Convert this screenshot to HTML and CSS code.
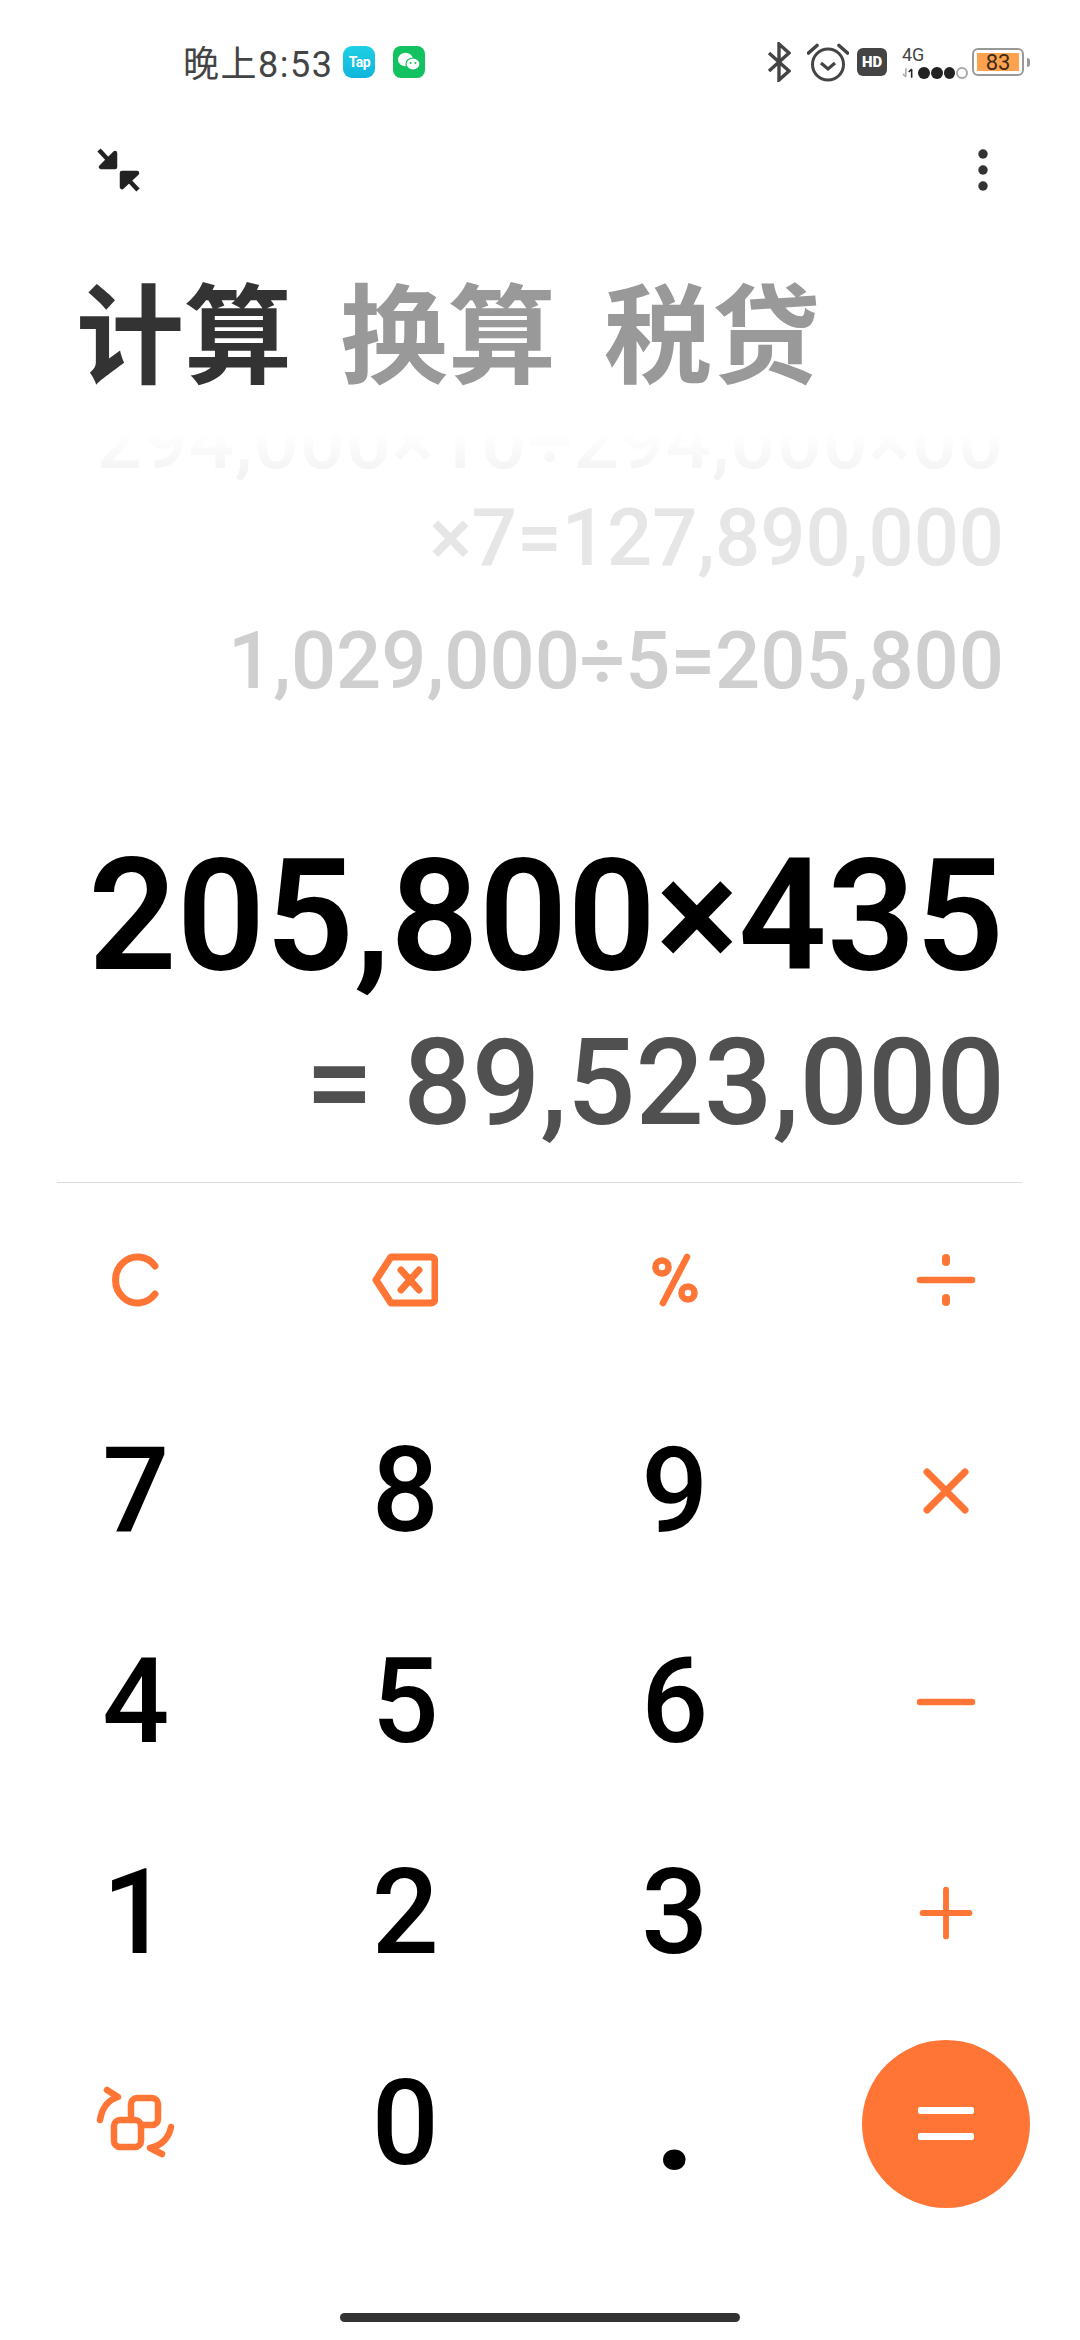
FILE: index.html
```html
<!DOCTYPE html>
<html lang="zh-CN">
  <head>
    <meta charset="UTF-8" />
    <title>计算器</title>
    <link rel="stylesheet" href="styles.css">
  </head>
  <body>
    <div class="phone">
      <!-- status bar -->
      <div class="status">
        <div class="status-left">
          <span class="time">晚上8:53</span>
          <span class="tap-badge">Tap</span>
          <svg class="wechat" viewBox="0 0 32 32">
            <rect width="32" height="32" rx="8" fill="#12c15f"/>
            <ellipse cx="12.5" cy="13.5" rx="7.5" ry="6.8" fill="#fff"/>
            <ellipse cx="20" cy="18" rx="7" ry="6" fill="#fff" stroke="#12c15f" stroke-width="1.2"/>
            <circle cx="17.6" cy="17" r="1" fill="#12c15f"/>
            <circle cx="22.4" cy="17" r="1" fill="#12c15f"/>
          </svg>
        </div>
        <div class="status-right">
          <svg class="ic-bt" viewBox="0 0 24 40" fill="none" stroke="#444" stroke-width="3.4">
            <path d="M2 11 22 29 12 38V2l10 9L2 29"/>
          </svg>
          <svg class="ic-alarm" viewBox="0 0 42 40" fill="none" stroke="#444" stroke-width="3">
            <circle cx="21" cy="22.500" r="15.500"/>
            <path d="M14 21l7 6 7-6" stroke-width="3.2"/>
            <path d="M1.500 11 10 3.500M40.500 11 32 3.500" stroke-width="3.600" stroke-linecap="round"/>
          </svg>
          <span class="hd">HD</span>
          <div class="signal">
            <span class="net">4G</span>
            <div class="dots">
              <svg class="arrows" viewBox="0 0 16 12" fill="none" stroke-width="1.600">
                <path d="M4 1v9M1 7l3 3" stroke="#aaa"/>
                <path d="M10 11V2M7 5l3-3" stroke="#222"/>
              </svg>
              <i class="dot"></i><i class="dot"></i><i class="dot"></i><i class="dot off"></i>
            </div>
          </div>
          <div class="battery"><div class="level">83</div></div>
          <i class="nub"></i>
        </div>
      </div>

      <!-- toolbar -->
      <div class="toolbar">
        <svg class="ic-shrink" viewBox="0 0 44 44" fill="#222" stroke="#222" stroke-width="4.500" stroke-linejoin="round">
          <path d="M4 19H18V5Z"/>
          <path d="M2 2 16 17" fill="none"/>
          <path d="M25 39V25H40Z"/>
          <path d="M41 42 27 27" fill="none"/>
        </svg>
        <svg class="ic-more" viewBox="0 0 12 44" fill="#333">
          <circle cx="6" cy="6" r="4.700"/>
          <circle cx="6" cy="22" r="4.700"/>
          <circle cx="6" cy="38" r="4.700"/>
        </svg>
      </div>

      <!-- tabs -->
      <div class="tabs">
        <span class="tab active">计算</span>
        <span class="tab">换算</span>
        <span class="tab">税贷</span>
      </div>

      <!-- history and current expression -->
      <div class="history">
        <div class="line l1">294,000×10÷294,000×00</div>
        <div class="line l2">×7=127,890,000</div>
        <div class="line l3">1,029,000÷5=205,800</div>
      </div>
      <div class="expr">205,800×435</div>
      <div class="result">= 89,523,000</div>
      <div class="divider"></div>

      <!-- keypad -->
      <div class="keys">
        <div class="key">
          <svg class="op" viewBox="0 0 60 54" fill="none" stroke="#ff7535" stroke-width="7" stroke-linecap="round">
            <path d="M49 13A22 23 0 1 0 49 41"/>
          </svg>
        </div>
        <div class="key">
          <svg class="op-back" viewBox="0 0 66 54" fill="none" stroke="#ff7535" stroke-width="7" stroke-linejoin="round" stroke-linecap="round">
            <path d="M19 4H59a4 4 0 0 1 4 4V46a4 4 0 0 1-4 4H19L4 27Z"/>
            <path d="M29 17 47 37M47 17 29 37"/>
          </svg>
        </div>
        <div class="key">
          <svg class="op" viewBox="0 0 48 54" fill="none" stroke="#ff7535" stroke-width="6.500" stroke-linecap="round">
            <path d="M36 4 12 50"/>
            <circle cx="11" cy="14" r="6.500"/>
            <circle cx="37" cy="40" r="6.500"/>
          </svg>
        </div>
        <div class="key">
          <svg class="op" viewBox="0 0 60 54" fill="none" stroke="#ff7535" stroke-width="6.500" stroke-linecap="round">
            <path d="M4 27H56"/>
            <path d="M30 5v4M30 45v4" stroke-width="8"/>
          </svg>
        </div>

        <div class="key">7</div>
        <div class="key">8</div>
        <div class="key">9</div>
        <div class="key">
          <svg class="op" viewBox="0 0 60 54" fill="none" stroke="#ff7535" stroke-width="7" stroke-linecap="round">
            <path d="M11 8 49 46M49 8 11 46"/>
          </svg>
        </div>

        <div class="key">4</div>
        <div class="key">5</div>
        <div class="key">6</div>
        <div class="key">
          <svg class="op" viewBox="0 0 60 54" fill="none" stroke="#ff7535" stroke-width="6.500" stroke-linecap="round">
            <path d="M4 27H56"/>
          </svg>
        </div>

        <div class="key">1</div>
        <div class="key">2</div>
        <div class="key">3</div>
        <div class="key">
          <svg class="op" viewBox="0 0 60 60" fill="none" stroke="#ff7535" stroke-width="6.500" stroke-linecap="round">
            <path d="M4 30H56M30 4V56"/>
          </svg>
        </div>

        <div class="key">
          <svg class="ic-swap" viewBox="0 0 76 76" fill="none" stroke="#ff7535" stroke-width="6.500" stroke-linecap="round" stroke-linejoin="round">
            <path d="M33 34V18a6 6 0 0 1 6-6H54a6 6 0 0 1 6 6V33a6 6 0 0 1-6 6H43"/>
            <rect x="16" y="34" width="27" height="27" rx="6"/>
            <path d="M2 34C4 22 10 14 20 11L9 4"/>
            <path d="M73 41C71 52 63 60 52 62L64 68"/>
          </svg>
        </div>
        <div class="key">0</div>
        <div class="key key-dot">.</div>
        <div class="key"><div class="equals"><i></i><i></i></div></div>
      </div>

      <div class="home-bar"></div>
    </div>
  </body>
</html>
```

FILE: styles.css
```css
* {
  margin: 0;
  padding: 0;
  box-sizing: border-box;
}

body {
  background: #fff;
  font-family: Roboto, "Noto Sans CJK SC", sans-serif;
}

.phone {
  width: 1080px;
  height: 2340px;
  overflow: hidden;
  display: flex;
  flex-direction: column;
}

/* status bar */
.status {
  height: 124px;
  padding: 0 50px 0 183px;
  display: flex;
  justify-content: space-between;
  align-items: center;
}

.status-left,
.status-right {
  display: flex;
  align-items: center;
}

.time {
  padding-bottom: 3px;
  font-size: 36px;
  color: #444;
  letter-spacing: 1.5px;
}

.tap-badge {
  width: 32px;
  height: 32px;
  margin-left: 10px;
  border-radius: 9px;
  background: linear-gradient(#1fd0e2, #10b4dc);
  color: #fff;
  font-size: 14px;
  font-weight: 700;
  line-height: 32px;
  text-align: center;
  letter-spacing: -0.5px;
}

.wechat {
  width: 32px;
  height: 32px;
  margin-left: 18px;
}

.ic-bt {
  width: 24px;
  height: 40px;
}

.ic-alarm {
  width: 42px;
  height: 40px;
  margin-left: 16px;
}

.hd {
  width: 30px;
  height: 28px;
  margin-left: 8px;
  border-radius: 6px;
  background: #444;
  color: #fff;
  font-size: 15px;
  font-weight: 900;
  line-height: 28px;
  text-align: center;
}

.signal {
  width: 66px;
  margin-left: 15px;
  display: flex;
  flex-direction: column;
}

.net {
  font-size: 18px;
  line-height: 20px;
  color: #444;
}

.dots {
  margin-top: 2px;
  display: flex;
  align-items: center;
  gap: 1px;
}

.arrows {
  width: 16px;
  height: 12px;
}

.dot {
  width: 12px;
  height: 12px;
  border-radius: 50%;
  background: #222;
}

.dot.off {
  background: none;
  border: 2px solid #aaa;
}

.battery {
  width: 52px;
  height: 28px;
  margin-left: 4px;
  padding: 3px;
  border: 2px solid #999;
  border-radius: 6px;
}

.level {
  width: 42px;
  height: 18px;
  background: #ffa24d;
  color: #3a2a1a;
  font-size: 22px;
  line-height: 19px;
  text-align: center;
}

.nub {
  width: 3px;
  height: 9px;
  margin-left: 3px;
  background: #999;
  border-radius: 0 3px 3px 0;
}

/* toolbar */
.toolbar {
  height: 92px;
  padding: 0 91px 0 97px;
  display: flex;
  justify-content: space-between;
  align-items: center;
}

.ic-shrink {
  width: 44px;
  height: 44px;
}

.ic-more {
  width: 12px;
  height: 44px;
}

/* tabs */
.tabs {
  height: 158px;
  margin-top: 33px;
  padding-left: 76px;
  display: flex;
  gap: 48px;
  align-items: center;
  font-family: "Noto Sans CJK SC", sans-serif;
  font-size: 108px;
  font-weight: 700;
  color: #999;
}

.tab.active {
  color: #333;
}

/* display */
.history {
  height: 289px;
  margin-top: 26px;
  padding-right: 76px;
  overflow: hidden;
  display: flex;
  flex-direction: column;
  justify-content: flex-end;
  align-items: flex-end;
  -webkit-mask-image: linear-gradient(transparent, #000 40px);
  mask-image: linear-gradient(transparent, #000 40px);
}

.line {
  flex: none;
  height: 123px;
  font-size: 79.500px;
  font-weight: 500;
  line-height: 123px;
  white-space: nowrap;
}

.l1 {
  color: #f3f3f3;
  letter-spacing: 0.900px;
}

.l2 {
  margin-top: -26px;
  color: #e6e6e6;
}

.l3 {
  color: #cfcfcf;
}

.expr {
  margin-top: 99px;
  padding-right: 76px;
  font-size: 155px;
  font-weight: 600;
  line-height: 190px;
  color: #000;
  text-align: right;
}

.result {
  margin-top: -3px;
  padding-right: 75px;
  font-size: 120.500px;
  font-weight: 500;
  line-height: 150px;
  color: #505050;
  text-align: right;
}

.divider {
  height: 1px;
  margin: 24px 58px 0 57px;
  background: #dcdcdc;
}

/* keypad */
.keys {
  margin-top: -9px;
  padding-left: 1px;
  display: grid;
  grid-template-columns: repeat(3, 269.5px) 273px;
  grid-auto-rows: 211px;
  font-size: 118px;
  font-weight: 550;
  color: #000;
}

.key {
  display: flex;
  justify-content: center;
  align-items: center;
}

/* у точки в оригинале глиф заметно крупнее */
.key-dot {
  font-size: 132px;
  font-weight: 800;
}

.op {
  width: 60px;
  height: 54px;
}

.op-back {
  width: 66px;
  height: 54px;
}

.ic-swap {
  width: 76px;
  height: 76px;
  overflow: visible;
}

.equals {
  width: 168px;
  height: 168px;
  border-radius: 50%;
  background: #ff7535;
  display: flex;
  flex-direction: column;
  justify-content: center;
  align-items: center;
  gap: 19px;
}

.equals i {
  width: 56px;
  height: 7px;
  border-radius: 2px;
  background: #fff;
}

.home-bar {
  width: 400px;
  height: 9px;
  margin: auto auto 18px;
  border-radius: 5px;
  background: #333;
}
```
